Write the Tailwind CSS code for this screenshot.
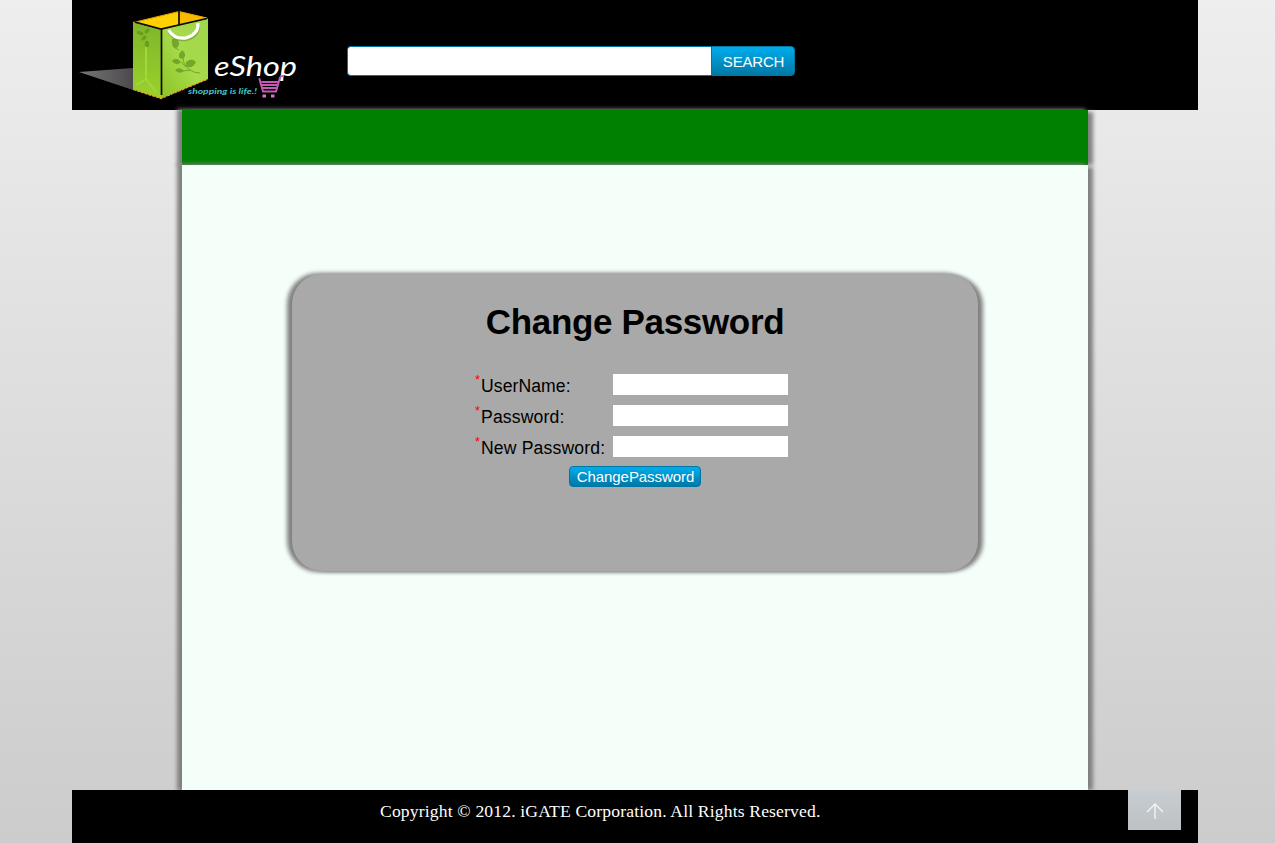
<!DOCTYPE html>
<html lang="en">
<head>
<meta charset="utf-8">
<title>eShop - Change Password</title>
<script src="https://cdn.jsdelivr.net/npm/@tailwindcss/browser@4"></script>
</head>
<body class="h-[843px] overflow-hidden bg-linear-to-b from-[#eeeeee] to-[#cccccc] font-['Liberation_Sans',Arial,sans-serif] text-black">
<div class="ml-[72px] flex h-[843px] w-[1126px] flex-col">
  <header class="flex h-[110px] shrink-0 bg-black">
    <svg class="h-[110px] w-[240px] shrink-0" viewBox="72 0 240 110" role="img" aria-label="eShop">
      <defs>
        <linearGradient id="floor" x1="0" x2="1"><stop offset="0" stop-color="#777"/><stop offset="1" stop-color="#4c494c"/></linearGradient>
        <linearGradient id="side" x1="0" y1="0" x2="0" y2="1"><stop offset="0" stop-color="#80b52a"/><stop offset="1" stop-color="#9bd12c"/></linearGradient>
        <linearGradient id="front" x1="1" y1="0" x2="0" y2="1"><stop offset="0" stop-color="#a0d64b"/><stop offset=".5" stop-color="#a8da4a"/><stop offset="1" stop-color="#8bc424"/></linearGradient>
      </defs>
      <path d="M79 72L133 68V90Z" fill="url(#floor)"/>
      <path d="M134 22.500L179 11.500L207 18L161 29Z" fill="#ffd100"/>
      <path d="M179 11.500L207 18L180 24.500Z" fill="#f9b900"/>
      <path d="M133 22.500L161 29V98.500L133 89.500Z" fill="url(#side)"/>
      <path d="M161 29L208 18.500V79L161 98.500Z" fill="url(#front)"/>
      <path d="M133 89.500L161 98.500L208 79" fill="none" stroke="#e8a51c" stroke-width="1.200" stroke-dasharray="3 1"/>
      <path d="M133 22.500L179 11.500L207 18" fill="none" stroke="#e5a300"/>
      <path d="M135 22L161 29L207 18.500M161.500 29V95M179 11V25" fill="none" stroke="#080b00" stroke-width="1.700"/>
      <path d="M146 47V79L136 85M146 79L156 92" fill="none" stroke="#a3d936" stroke-width="2"/>
      <g fill="#5d941b" opacity=".7">
        <ellipse cx="140" cy="33" rx="3.500" ry="1.800" transform="rotate(20 140 33)"/><ellipse cx="147" cy="31" rx="3" ry="1.700" transform="rotate(-45 147 31)"/><ellipse cx="144" cy="38" rx="3" ry="1.700" transform="rotate(-45 144 38)"/><ellipse cx="147" cy="44" rx="2.200" ry="3.300"/>
        <path d="M172 39Q180 38 179 45Q177 50 173 47Q171 43 172 39ZM182 50Q187 54 184 58Q178 60 179 54ZM172 61Q176 56 181 62Q176 67 172 61ZM186 62Q192 57 196 62Q192 70 186 66ZM175 70Q180 66 184 71Q179 75 175 70Z"/>
        <path d="M175 48L179 50M183 57Q183 66 190 70Q194 73 200 73M181 62L186 67M183 71L191 70" fill="none" stroke="#5d941b"/>
      </g>
      <path d="M168 31Q173 42 187 40Q201 36 198.500 23" fill="none" stroke="#5d8c20" stroke-width="2" opacity=".5"/>
      <path d="M168.500 30Q174 39.500 186 38Q199 34 198 23" fill="none" stroke="#fff" stroke-width="3.200"/>
      <text x="214" y="76" textLength="83" lengthAdjust="spacingAndGlyphs" fill="#fff" font-family="Lato,sans-serif" font-style="italic" font-size="27">eShop</text>
      <text x="188" y="94" textLength="69" lengthAdjust="spacingAndGlyphs" fill="#41c4cc" font-family="Lato,sans-serif" font-style="italic" font-weight="700" font-size="8">shopping is life.!</text>
      <g fill="none" stroke="#c45ab5" stroke-linecap="round">
        <path d="M259.500 79L263 91.500H276L280 77.500Q281 76 283 76" stroke-width="2"/>
        <path d="M262 82H278M262 85H277M263 88H276" stroke-width="1.800"/>
      </g>
      <path d="M262.500 94.500h3.500v3h-3.500zM271 94.500h3.500v3H271z" fill="#d474c8"/>
    </svg>
    <form class="mt-[46px] ml-[35px] flex h-[30px] w-[448px]">
      <input aria-label="Search" class="h-[30px] w-[364px] rounded-l-[4px] border border-r-0 border-[#0076a3] bg-white px-2 outline-none">
      <button type="button" class="h-[30px] w-[84px] rounded-r-[4px] border border-[#0076a3] bg-linear-to-b from-[#00adee] to-[#0078a5] pt-px pl-px text-[15px] leading-[27px] text-[#fefefe]"><span class="tracking-[-0.2px]">SEARCH</span></button>
    </form>
  </header>
  <nav class="mx-auto h-[55px] w-[906px] shrink-0 bg-[#008000] shadow-[-4px_0_4px_1px_#808080,6px_1px_4px_-1px_#808080]"></nav>
  <main class="mx-auto flex h-[625px] w-[906px] shrink-0 justify-center bg-[#f5fffa] pt-[109px] shadow-[-4px_0_4px_1px_#808080,6px_1px_4px_-1px_#808080]">
    <section class="flex h-[297px] w-[686px] flex-col items-center rounded-[30px] bg-[#a9a9a9] shadow-[-4px_0_4px_1px_#808080,6px_1px_4px_-1px_#808080]">
      <h1 class="mt-[28px] h-10 text-[35px] leading-10 font-bold tracking-[-0.33px] whitespace-nowrap">Change Password</h1>
      <form class="mt-[32px] flex w-[320px] flex-col">
        <div class="flex h-[31px]">
          <label for="user" class="flex w-[138px] text-[17.600px] leading-[25px] tracking-[0.08px] whitespace-nowrap"><span class="w-[6px] text-[13px] leading-[11px] text-[#ff0000]">*</span>UserName:</label>
          <input id="user" class="h-[21px] w-[175px] bg-white px-1 outline-none">
        </div>
        <div class="flex h-[31px]">
          <label for="pass" class="flex w-[138px] text-[17.600px] leading-[25px] tracking-[0.16px] whitespace-nowrap"><span class="w-[6px] text-[13px] leading-[11px] text-[#ff0000]">*</span>Password:</label>
          <input id="pass" type="password" class="h-[21px] w-[175px] bg-white px-1 outline-none">
        </div>
        <div class="flex h-[31px]">
          <label for="new" class="flex w-[138px] text-[17.600px] leading-[25px] tracking-[0.16px] whitespace-nowrap"><span class="w-[6px] text-[13px] leading-[11px] text-[#ff0000]">*</span>New Password:</label>
          <input id="new" type="password" class="h-[21px] w-[175px] bg-white px-1 outline-none">
        </div>
        <button type="button" class="-mt-px h-[21px] w-[132px] self-center rounded-[4px] border border-[#0076a3] bg-linear-to-b from-[#00adee] to-[#0078a5] pl-px text-[15px] leading-[19px] tracking-[-0.06px] text-[#fefefe]">ChangePassword</button>
      </form>
    </section>
  </main>
  <footer class="relative flex h-[53px] shrink-0 bg-black">
    <p class="ml-[308px] pt-[9px] font-['Liberation_Serif','Times_New_Roman',serif] text-[17.600px] leading-6 tracking-[0.155px] whitespace-nowrap text-white">Copyright © 2012. iGATE Corporation. All Rights Reserved.</p>
    <a href="#" aria-label="Back to top" class="mr-[17px] ml-auto flex h-10 w-[53px] items-center justify-center bg-linear-to-b from-[#c7cdd1] to-[#bbc1c4]">
      <svg class="mt-[2px] h-5 w-5" viewBox="0 0 20 20" fill="none" stroke="#f2f4f5" stroke-width="1.400"><path d="M10 18V3M2 11L10 3L18 11"/></svg>
    </a>
  </footer>
</div>
</body>
</html>
